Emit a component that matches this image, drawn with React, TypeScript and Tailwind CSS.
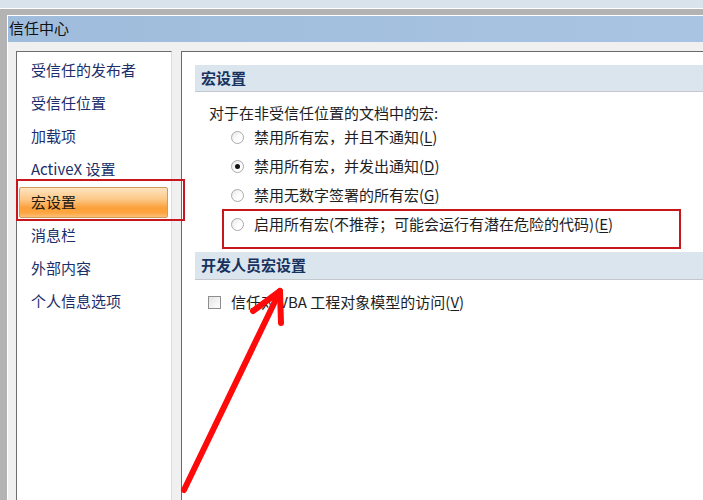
import React from "react";

const font = { fontFamily: '"Noto Sans CJK SC", "Noto Sans", sans-serif' };

function Radio({ checked }: { checked?: boolean }) {
  return (
    <div className="w-[13px] h-[13px] rounded-full border border-[#a9a9a9] bg-[linear-gradient(135deg,#e6e6e6_0%,#ffffff_60%,#ffffff_100%)] flex items-center justify-center shrink-0">
      {checked && <div className="w-[5px] h-[5px] rounded-full bg-[#111111]" />}
    </div>
  );
}

function Key({ k }: { k: string }) {
  return (
    <>
      (<span className="underline underline-offset-2">{k}</span>)
    </>
  );
}

const navItems = [
  "受信任的发布者",
  "受信任位置",
  "加载项",
  "ActiveX 设置",
  "宏设置",
  "消息栏",
  "外部内容",
  "个人信息选项",
];

export default function App() {
  return (
    <div
      className="relative w-[703px] h-[500px] overflow-hidden flex flex-col bg-[#b3b3b3] text-[15px]"
      style={font}
    >
      <div className="h-[8px] bg-[#d9e3ec] shrink-0" />
      <div className="h-[1px] bg-white shrink-0" />
      <div className="flex-1 flex flex-col pt-[6px] pl-[7px] min-h-0">
        <div className="flex-1 flex flex-col border-t border-l border-white min-h-0">
          <div className="h-[26px] shrink-0 bg-[linear-gradient(to_right,#a0bcdc,#a8c4e2)] flex items-center pl-[1px] pb-[3px] text-[15px] text-[#111111] leading-none">
            信任中心
          </div>
          <div className="flex-1 flex bg-[#f0f0f0] pt-[9px] pl-[8px] min-h-0">
            {/* left nav */}
            <div className="w-[156px] shrink-0 bg-white border-t border-l border-[#6e6e6e] border-r border-r-[#dcdcdc] pt-[2px] flex flex-col">
              {navItems.map((t, i) =>
                i === 4 ? (
                  <div key={t} className="h-[33px] flex items-center">
                    <div className="ml-[2px] w-[149px] h-[31px] flex items-center pl-[11px] pb-[2px] border border-[#d49a5a] rounded-[2px] bg-[linear-gradient(to_bottom,#fee3c0_0%,#fdc785_40%,#fba13c_68%,#fda540_85%,#fcbf78_100%)] text-[#231a14] leading-none">
                      {t}
                    </div>
                  </div>
                ) : (
                  <div key={t} className="h-[33px] flex items-center pl-[14px] pb-[3px] text-[#1c2f6a] leading-none">
                    {t}
                  </div>
                )
              )}
            </div>
            {/* right panel */}
            <div className="ml-[9px] flex-1 bg-white border-t border-l border-[#6a6a6a] pt-[13px] pl-[13px] flex flex-col">
              <div className="h-[27px] shrink-0 bg-[#dbe5ee] border-b border-[#c4c8cc] flex items-center pl-[6px] pb-[2px] font-bold text-[#17325e] leading-none">
                宏设置
              </div>
              <div className="mt-[11px] h-[20px] flex items-center pl-[14px] pb-[2px] text-[#1e1e1e] leading-none">
                对于在非受信任位置的文档中的宏:
              </div>
              {[
                { t: "禁用所有宏，并且不通知", k: "L", c: false },
                { t: "禁用所有宏，并发出通知", k: "D", c: true },
                { t: "禁用无数字签署的所有宏", k: "G", c: false },
                { t: "启用所有宏(不推荐；可能会运行有潜在危险的代码)", k: "E", c: false },
              ].map((r) => (
                <div key={r.k} className="h-[29px] flex items-center pl-[36px] text-[#1e1e1e] leading-none">
                  <Radio checked={r.c} />
                  <span className="ml-[10px] -translate-y-[1px]">
                    {r.t}
                    <Key k={r.k} />
                  </span>
                </div>
              ))}
              <div className="mt-[13px] h-[28px] shrink-0 bg-[#dbe5ee] border-b border-[#c4c8cc] flex items-center pl-[6px] pb-[2px] font-bold text-[#17325e] leading-none">
                开发人员宏设置
              </div>
              <div className="mt-[8px] h-[29px] flex items-center pl-[13px] text-[#1e1e1e] leading-none">
                <div className="w-[13px] h-[13px] border border-[#8e8e8e] bg-[linear-gradient(135deg,#e4e4e4,#ffffff)] shrink-0" />
                <span className="ml-[10px] -translate-y-[1px]">
                  信任对 VBA 工程对象模型的访问
                  <Key k="V" />
                </span>
              </div>
            </div>
          </div>
        </div>
      </div>

      {/* annotation: red boxes */}
      <div className="absolute left-[16px] top-[179px] w-[169px] h-[42px] border-2 border-[#c8161d] pointer-events-none" />
      <div className="absolute left-[222px] top-[209px] w-[459px] h-[40px] border-2 border-[#c8161d] pointer-events-none" />

      {/* annotation: arrow */}
      <svg className="absolute left-0 top-0 pointer-events-none" width="703" height="500" viewBox="0 0 703 500">
        <g stroke="#ff0a0a" strokeWidth="6" strokeLinecap="round" strokeLinejoin="round" fill="none">
          <path d="M184 490 L280 291" />
          <path d="M253 311 L280 291 L281 323" />
        </g>
      </svg>
    </div>
  );
}
